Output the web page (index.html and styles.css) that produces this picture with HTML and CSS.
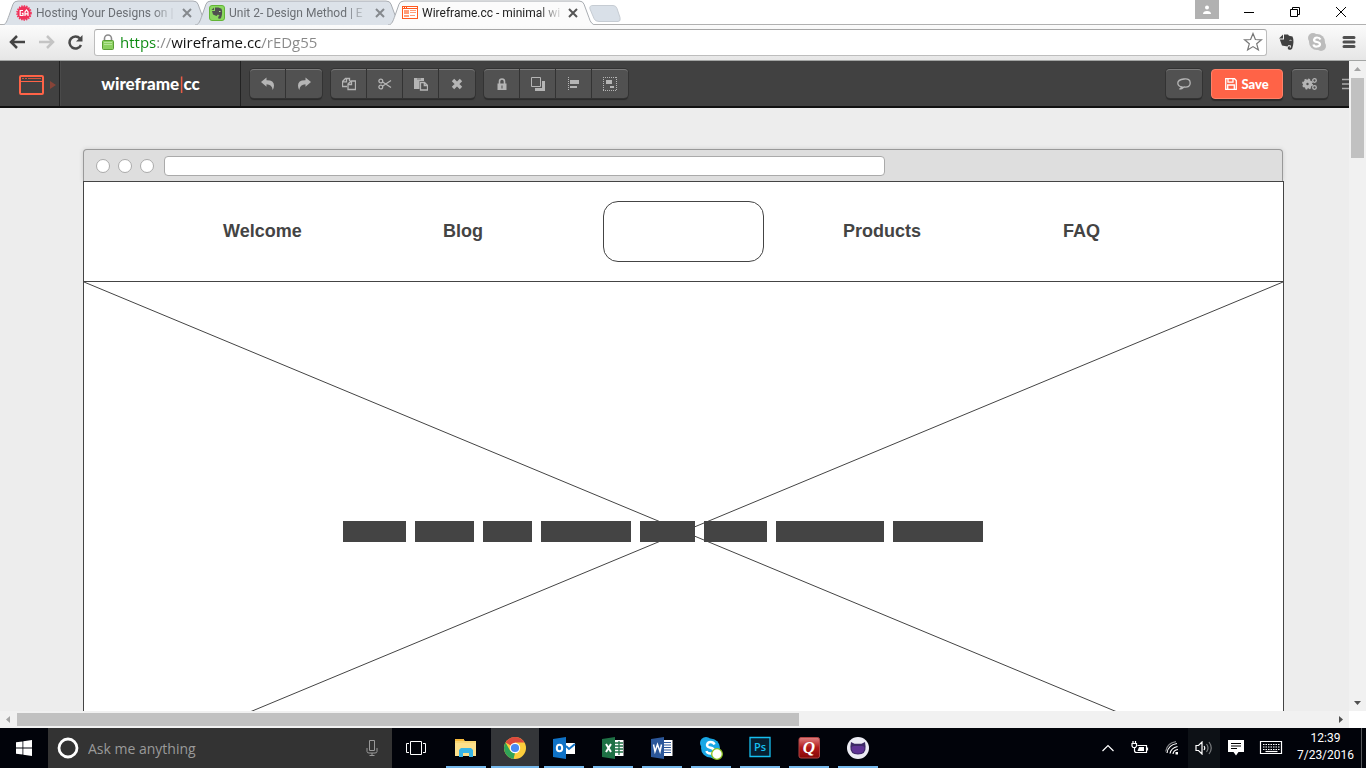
FILE: index.html
```html
<!DOCTYPE html>
<html lang="en">
<head>
<meta charset="utf-8">
<title>Wireframe.cc - minimal wireframing tool</title>
<link rel="stylesheet" href="styles.css">
</head>
<body>
<header class="tabstrip">
  <nav class="tabs" aria-label="Open tabs">
    <div class="tab">
      <svg class="tab-shape" viewBox="0 0 208 24" preserveAspectRatio="none"><path d="M0 24C4 24 5 20 7 15L11 4Q12 1 16 1H191Q195 1 196 4L201 17Q203 24 208 24" vector-effect="non-scaling-stroke"/></svg>
      <svg class="favicon" viewBox="0 0 16 16"><circle cx="8" cy="8" r="6.8" fill="#f0325a"/><circle cx="8" cy="8" r="7" fill="none" stroke="#f0325a" stroke-width="1.6" stroke-dasharray="1.4 1.1"/><path d="M7 5.500H4.200v5H7V8.300H5.800M9 11V7l1.500-2L12 7v4M9 8.800h3" fill="none" stroke="#fff" stroke-width="1.200"/></svg>
      <a class="tab-title" href="#">Hosting Your Designs on |</a>
      <button class="tab-close" aria-label="Close tab"><svg viewBox="0 0 10 10"><path d="M1 1l8 8M9 1L1 9"/></svg></button>
    </div>
    <div class="tab">
      <svg class="tab-shape" viewBox="0 0 208 24" preserveAspectRatio="none"><path d="M0 24C4 24 5 20 7 15L11 4Q12 1 16 1H191Q195 1 196 4L201 17Q203 24 208 24" vector-effect="non-scaling-stroke"/></svg>
      <svg class="favicon" viewBox="0 0 16 16"><rect x=".5" y=".5" width="15" height="15" rx="2.500" fill="#8bd860" stroke="#62b536"/><path d="M6 2.500h3.500l3 1.300c1 2.500.8 6-.3 8.700-.6 1.700-3 1.500-3 0 0-1.300 1-1.800 1.800-1.300L9 9.500 7.500 11 4 9.500 3 6h3z" fill="#505050"/><path d="M2.500 5L5 2.500V5z" fill="#505050"/><path d="M10 6.500h1.500" stroke="#b7e89c"/></svg>
      <a class="tab-title" href="#">Unit 2- Design Method | E</a>
      <button class="tab-close" aria-label="Close tab"><svg viewBox="0 0 10 10"><path d="M1 1l8 8M9 1L1 9"/></svg></button>
    </div>
    <div class="tab tab-active">
      <svg class="tab-shape" viewBox="0 0 208 24" preserveAspectRatio="none"><path d="M0 24C4 24 5 20 7 15L11 4Q12 1 16 1H191Q195 1 196 4L201 17Q203 24 208 24" vector-effect="non-scaling-stroke"/></svg>
      <svg class="favicon" viewBox="0 0 16 16"><path d="M0 1h16v13H0z" fill="#ff5a1f"/><path d="M1 4h14v9H1z" fill="#fff"/><path d="M1 2.500h1M3 2.500h1M5 2.500h10" stroke="#fff"/><path d="M2 5h5v4H2zM8 5h6v1H8zM8 7h6v1H8zM2 10h5v2H2zM8 10h5v1H8z" fill="#ff9c78"/></svg>
      <a class="tab-title" href="#">Wireframe.cc - minimal wi</a>
      <button class="tab-close" aria-label="Close tab"><svg viewBox="0 0 10 10"><path d="M1 1l8 8M9 1L1 9"/></svg></button>
    </div>
    <button class="new-tab" aria-label="New tab"><svg viewBox="0 0 32 17"><path d="M4 .5h20q3 0 4 3l3 9q1 4-2 4H10q-4 0-5-3L1 4Q0 .5 4 .5z" fill="#d9e0e8" stroke="#c6ccd3"/></svg></button>
  </nav>
  <div class="window-controls">
    <button class="profile" aria-label="Profile"><svg width="10" height="10" viewBox="0 0 10 10"><circle cx="5" cy="2.500" r="2" fill="#fff"/><path d="M1 9q0-3 4-3t4 3z" fill="#fff"/></svg></button>
    <button class="win" aria-label="Minimize"><svg width="12" height="12" viewBox="0 0 12 12"><path d="M1 6.500h10"/></svg></button>
    <button class="win" aria-label="Restore"><svg width="12" height="12" viewBox="0 0 12 12"><path d="M1.500 3.500h7v7h-7zM3.500 3.500v-2h7v7h-2"/></svg></button>
    <button class="win" aria-label="Close"><svg width="12" height="12" viewBox="0 0 12 12"><path d="M1 1l10 10M11 1L1 11"/></svg></button>
  </div>
</header>

<div class="addressbar">
  <button class="nav-btn" aria-label="Back"><svg width="17" height="16" viewBox="0 0 17 16"><path d="M8 2L2 8l6 6M2 8h14" stroke="#444"/></svg></button>
  <button class="nav-btn" aria-label="Forward"><svg width="17" height="16" viewBox="0 0 17 16"><path d="M9 2l6 6-6 6M15 8H1" stroke="#c4c4c4"/></svg></button>
  <button class="nav-btn" aria-label="Reload"><svg width="17" height="16" viewBox="0 0 17 16"><path d="M13 4.500A6 6 0 1 0 14 11" stroke="#4a4a4a"/><path d="M15.500 1v6.500H9z" fill="#4a4a4a" stroke="none"/></svg></button>
  <div class="omnibox">
    <svg width="12" height="16" viewBox="0 0 12 16"><path d="M2.500 7V4.500a3.500 3.500 0 0 1 7 0V7" fill="none" stroke="#8b8b8b" stroke-width="1.600"/><rect x=".5" y="6.500" width="11" height="9" rx="1" fill="#8bd05f" stroke="#5a9e35"/><path d="M2 8.500h8M2 10.500h8" stroke="#b5e598"/></svg>
    <input class="url" type="text" aria-label="Address" value="https://wireframe.cc/rEDg55">
    <button class="icon-btn" aria-label="Bookmark"><svg width="20" height="20" viewBox="0 0 20 20"><path d="M10 1.500l2.400 6 6.100.3-4.800 4 1.700 6.200-5.400-3.400L4.600 18l1.700-6.200-4.800-4 6.100-.3z" fill="#fff" stroke="#777" stroke-width="1.200"/></svg></button>
  </div>
  <button class="icon-btn" aria-label="Evernote"><svg width="16" height="18" viewBox="0 0 16 18"><path d="M5 1.500h4l1 1.200 3.500.8c1.500 3 1.200 8-.3 12-1 1.800-4 1.800-4.400 0-.2-2 1.200-2.700 2.200-2l-.3 1.200h1l.3-2.200-2.500-.5-1 1.500L3 12.500.8 6.500H5z" fill="#414141"/><path d="M0 5.500L4 1.500v4z" fill="#414141"/><path d="M10.500 7.500q1.500-1 2 .5" stroke="#ccc" fill="none"/></svg></button>
  <button class="icon-btn" aria-label="Skype"><svg width="20" height="20" viewBox="0 0 20 20"><circle cx="6" cy="6" r="5" fill="#bcbcbc"/><circle cx="14" cy="14" r="5" fill="#bcbcbc"/><circle cx="10" cy="10" r="8" fill="#bcbcbc"/><path d="M13.500 7.500Q12.500 5.500 10 5.500T7 8q0 1.500 3 2t3 2.300-3 2.200-3.600-2" fill="none" stroke="#fff" stroke-width="2.200"/></svg></button>
  <button class="icon-btn menu" aria-label="Menu"><svg width="14" height="14" viewBox="0 0 14 14"><path d="M2 2.500h10M2 7h10M2 11.500h10" stroke="#505050" stroke-width="3" stroke-linecap="round"/></svg></button>
</div>

<main class="view">
  <div class="view-row">
    <section class="page">
      <div class="toolbar">
        <button class="device" aria-label="Device">
          <svg width="26" height="20" viewBox="0 0 26 20"><rect x="2" y="1" width="23" height="18" rx="1" fill="none" stroke="#ff6347" stroke-width="2"/><path d="M3 6.500h21" stroke="#ff6347"/><path d="M4 3.500h2M7 3.500h2M10 3.500h13" stroke="#d4573f"/></svg>
          <svg width="6" height="8" viewBox="0 0 6 8"><path d="M0 0l6 4-6 4z" fill="#874438"/></svg>
        </button>
        <a class="logo" href="#">wireframe<span class="logo-bar">|</span>cc</a>
        <div class="groups">
          <div class="group">
            <button aria-label="Undo"><svg width="16" height="14" viewBox="0 0 16 14"><path d="M1 5l5.500-4.500V3.200Q14 3 14 8.500q0 2-1.300 4.500Q12 7.500 6.500 7.300v2.400z"/></svg></button>
            <button aria-label="Redo"><svg width="16" height="14" viewBox="0 0 16 14"><path d="M15 5L9.500.5v2.700Q2 3 2 8.500q0 2 1.300 4.500Q4 7.500 9.500 7.300v2.400z"/></svg></button>
          </div>
          <div class="group">
            <button aria-label="Copy"><svg width="14" height="14" viewBox="0 0 14 14"><path class="line" d="M5 9.500H.5V4.500l3-3h4V4M4.500 1.500v3.300H1M6 12.500V7l3-3h4.500v8.500zM9.500 4v3.500H6"/></svg></button>
            <button aria-label="Cut"><svg width="14" height="14" viewBox="0 0 14 14"><path class="line" d="M4.300 4.800L13 10.500M4.300 9.200L13 3.500"/><circle class="line" cx="2.800" cy="4" r="1.900"/><circle class="line" cx="2.800" cy="10" r="1.900"/></svg></button>
            <button aria-label="Paste"><svg width="14" height="14" viewBox="0 0 14 14"><path d="M0 1h10v3H5.500v8H0z"/><path d="M3 1.500h4v1H3z" fill="#777"/><path class="line" d="M6.500 5.500h4l3 3v4.500h-7zM10.300 5.500v3h3"/></svg></button>
            <button aria-label="Delete"><svg width="12" height="12" viewBox="0 0 12 12"><path class="line thick" d="M2 2l8 8M10 2l-8 8"/></svg></button>
          </div>
          <div class="group">
            <button aria-label="Lock"><svg width="10" height="12" viewBox="0 0 10 12"><path d="M.5 5.500h9V12h-9z"/><path class="line thin" d="M2.500 6V3.500a2.500 2.500 0 0 1 5 0V6"/><path d="M4.500 7.500h1v3h-1z" fill="#505050"/></svg></button>
            <button aria-label="Arrange"><svg width="14" height="14" viewBox="0 0 14 14"><path d="M11 4h3v10H4v-3h7z"/><path class="line one" d="M.5.500h9v9h-9z"/></svg></button>
            <button aria-label="Align"><svg width="12" height="14" viewBox="0 0 12 14"><path class="line dots" d="M.5 0v14"/><path d="M2 3h9v4H2zM2 9h7v2H2z"/></svg></button>
            <button aria-label="Group"><svg width="14" height="14" viewBox="0 0 14 14"><path class="line dots" d="M0 .5h14M0 13.500h14M.5 0v14M13.500 0v14"/><path d="M3 3h6v4H3zM7 9h4v2H7z"/></svg></button>
          </div>
        </div>
        <div class="actions">
          <div class="group"><button aria-label="Comments"><svg width="14" height="12" viewBox="0 0 14 12"><path class="line" d="M5 9Q.8 8.200.8 5T7 1t6.200 4T7 9Q5 11 2.500 11 4.500 10 5 9z"/></svg></button></div>
          <button class="save"><svg width="12" height="12" viewBox="0 0 12 12"><path d="M.7.700h8.800l1.800 1.800v8.800H.7zM3 .7v3.500h5V.7M2.700 11V7h6.600v4" fill="none" stroke="#fff" stroke-width="1.300"/></svg>Save</button>
          <div class="group"><button aria-label="Settings"><svg width="16" height="14" viewBox="0 0 16 14"><circle class="line thick" cx="5.500" cy="7" r="2.900"/><circle class="line notch" cx="5.500" cy="7" r="4.700"/><circle class="line" cx="12.500" cy="3.500" r="1.800"/><circle class="line" cx="12.500" cy="10.500" r="1.800"/></svg></button></div>
          <button class="more" aria-label="More"><svg width="7" height="12" viewBox="0 0 7 12"><path d="M0 1.500h7M0 6h7M0 10.500h7" stroke="#aaa" stroke-width="1.500"/></svg></button>
        </div>
      </div>
      <div class="canvas">
        <article class="wire">
          <div class="wire-chrome"><i class="dot"></i><i class="dot"></i><i class="dot"></i><input class="wire-url" type="text" aria-label="Mock address"></div>
          <nav class="wire-nav">
            <a href="#" class="w1">Welcome</a><a href="#">Blog</a><div class="wire-logo"></div><a href="#">Products</a><a href="#">FAQ</a>
          </nav>
          <div class="hero">
            <svg class="cross" viewBox="0 0 1200 500" preserveAspectRatio="none"><path d="M0 0L1200 500M1200 0L0 500" vector-effect="non-scaling-stroke"/></svg>
            <div class="bars"><i class="b63"></i><i class="b59"></i><i class="b49"></i><i class="b90"></i><i class="b55"></i><i class="b63"></i><i class="b108"></i><i class="b90"></i></div>
          </div>
        </article>
      </div>
    </section>
    <div class="vscroll"><svg viewBox="0 0 17 17"><path d="M5 10l3.500-4 3.500 4z" fill="#a3a3a3"/></svg><i class="vthumb"></i><svg class="end" viewBox="0 0 17 17"><path d="M5 7l3.500 4L12 7z" fill="#505050"/></svg></div>
  </div>
  <div class="hscroll"><svg viewBox="0 0 17 17"><path d="M10 5L6 8.500l4 3.500z" fill="#a3a3a3"/></svg><i class="hthumb"></i><svg class="end" viewBox="0 0 17 17"><path d="M7 5l4 3.500L7 12z" fill="#505050"/></svg></div>
</main>

<footer class="taskbar">
  <button class="slot" aria-label="Start"><svg width="16" height="16" viewBox="0 0 16 16"><path d="M0 2.300L6.500 1.400V7.600H0zM7.300 1.300L16 0V7.600H7.300zM0 8.400h6.500v6.200L0 13.700zM7.300 8.400H16V16L7.300 14.700z" fill="#fff"/></svg></button>
  <div class="search">
    <svg width="22" height="22" viewBox="0 0 22 22"><circle cx="11" cy="11" r="9" fill="none" stroke="#fff" stroke-width="2.800"/></svg>
    <input type="text" aria-label="Search" placeholder="Ask me anything">
    <svg width="12" height="16" viewBox="0 0 12 16"><path d="M3.500.500h5v10h-5zM1 8v3.500q0 1.500 2 1.500h6q2 0 2-1.500V8M6 13v2.500M3.500 15.500h5" fill="none" stroke="#999"/></svg>
  </div>
  <button class="slot" aria-label="Task view"><svg width="20" height="14" viewBox="0 0 20 14"><path d="M4.500.500h11v13h-11zM3 2.500H.5v9H3M17 2.500h2.500v9H17" fill="none" stroke="#fff"/></svg></button>
  <div class="apps">
    <button class="app" aria-label="File Explorer"><svg viewBox="0 0 24 24"><path d="M1 3h8l2 2h11v15H1z" fill="#f9d774"/><path d="M1 3h9v2H1z" fill="#f5b93b"/><path d="M1 7h21v13H1z" fill="#fce08b"/><path d="M5 21v-7l2-2h10l2 2v7h-4v-4H9v4z" fill="#37b5e6"/></svg></button>
    <button class="app current" aria-label="Chrome"><svg viewBox="0 0 24 24"><circle cx="12" cy="12" r="11" fill="#fccd3c"/><path d="M12 12L2.500 6.500A11 11 0 0 1 21.500 6.500H12z" fill="#dc4a3e"/><path d="M2.500 6.500L7.300 15 12 17l-1.500 5.900A11 11 0 0 1 2.500 6.500z" fill="#30a357"/><circle cx="12" cy="12" r="5.200" fill="#fff"/><circle cx="12" cy="12" r="4.100" fill="#4a8af4"/></svg></button>
    <button class="app" aria-label="Outlook"><svg viewBox="0 0 24 24"><path d="M13 7h10v11H13z" fill="#fff"/><path d="M14 10l3 3 6-5" fill="none" stroke="#0f72c6" stroke-width="2"/><path d="M1 3l13-2v22L1 21z" fill="#0f72c6"/><ellipse cx="7.500" cy="12" rx="2.700" ry="3.300" fill="none" stroke="#fff" stroke-width="2"/></svg></button>
    <button class="app" aria-label="Excel"><svg viewBox="0 0 24 24"><path d="M13 4h9.500v16H13z" fill="#fff"/><path d="M14 7h8M14 10h8M14 13h8M14 16h8M18 5v14" stroke="#1e7145" stroke-width="1.300"/><path d="M1 3l13-2v22L1 21z" fill="#1e7145"/><path d="M5 8l5 8M10 8l-5 8" stroke="#fff" stroke-width="2"/></svg></button>
    <button class="app" aria-label="Word"><svg viewBox="0 0 24 24"><path d="M13 4h9.500v16H13z" fill="#fff"/><path d="M14 6.500h7M14 9h7M14 11.500h7M14 14h7M14 16.500h7" stroke="#2b579a" stroke-width="1.200"/><path d="M1 3l13-2v22L1 21z" fill="#2b579a"/><path d="M3.500 8.500l1.500 7 2.500-7 2.500 7 1.500-7" fill="none" stroke="#fff" stroke-width="1.500"/></svg></button>
    <button class="app" aria-label="Skype"><svg viewBox="0 0 24 24"><circle cx="7" cy="7" r="6" fill="#18a7e5"/><circle cx="11.500" cy="12" r="9.500" fill="#18a7e5"/><circle cx="16" cy="17" r="6" fill="#18a7e5"/><path d="M15.500 8.500Q14.500 6 11.500 6T8 9q0 2 3.500 2.700T15 15q0 2.500-3.500 2.500T7.500 15" fill="none" stroke="#fff" stroke-width="2.400"/><circle cx="18" cy="18" r="5.300" fill="#fff" stroke="#8bc220" stroke-width="1.300"/></svg></button>
    <button class="app" aria-label="Photoshop"><svg viewBox="0 0 24 24"><path d="M2 1.500h20v19H2z" fill="#071f30" stroke="#16bff0" stroke-width="1.300"/><text class="ps" x="12" y="15" text-anchor="middle">Ps</text></svg></button>
    <button class="app" aria-label="Quicken"><svg viewBox="0 0 24 24"><defs><linearGradient id="q" x2="0" y2="1"><stop stop-color="#e08080"/><stop offset=".5" stop-color="#b01818"/><stop offset="1" stop-color="#850808"/></linearGradient></defs><rect x="2" y="1.500" width="20.500" height="20.500" rx="2" fill="url(#q)" stroke="#b04444"/><text class="qk" x="12" y="17" text-anchor="middle">Q</text></svg></button>
    <button class="app" aria-label="GitHub"><svg viewBox="0 0 24 24"><circle cx="12" cy="12" r="11" fill="#ececf4"/><path d="M5 6l3.500 1.700h7L19 6l.6 4.500q.6 8-7.600 8t-7.600-8z" fill="#3d2a66"/><path d="M5.500 12q0-2 2.500-2h8q2.500 0 2.500 2 0 5.500-6.500 5.500T5.500 12z" fill="#5f3394"/></svg></button>
  </div>
  <div class="tray">
    <button aria-label="Show hidden icons"><svg width="14" height="8" viewBox="0 0 14 8"><path d="M1.500 7L7 1.500 12.500 7"/></svg></button>
    <button aria-label="Battery"><svg width="18" height="14" viewBox="0 0 18 14"><path d="M6.500 4.500h9v7H5M16.500 6.500v3M1 2.500h4.500v2.500L4.500 6.500H2L1 5zM2 2.500V0M4.500 2.500V0M3.500 6.500v3q0 2 2 2"/><path d="M8 6h5v4H6.500z" class="solid"/></svg></button>
    <button aria-label="Network"><svg width="15" height="14" viewBox="0 0 15 14"><path d="M2 12Q3 4 12 2.500M5 12.500q1-5.500 7.500-7M8 13q.5-4 5-4.500"/><path d="M.7 10.500Q2 2 11 .7" opacity=".5"/><path d="M10.500 11h2.500v2.500h-2.500z" class="solid"/></svg></button>
    <button class="lit" aria-label="Volume"><svg width="18" height="14" viewBox="0 0 18 14"><path d="M1 4.500h2.500L7 1v12L3.500 9.500H1zM9 5q1.500 2 0 4"/><path d="M11.500 3q3 4 0 8M14 1q4.500 6 0 12" opacity=".45"/></svg></button>
    <button aria-label="Notifications"><svg width="16" height="16" viewBox="0 0 16 16"><path class="solid" d="M0 0h16v12h-5.500L8 15.500 5.500 12H0z"/><path d="M3 3.500h10M3 6h10M3 8.500h6" stroke="#000"/></svg></button>
    <button class="wide" aria-label="Keyboard"><svg width="24" height="14" viewBox="0 0 24 14"><path d="M1.500.500h21v12h-21z"/><path d="M4 3.500h17M4 6h17M4 8.500h17" stroke-dasharray="1.500 1"/><path d="M6.500 10.500h12"/></svg></button>
    <div class="clock"><time>12:39</time><time>7/23/2016</time></div>
    <i class="desktop"></i>
  </div>
</footer>
</body>
</html>
```

FILE: styles.css
```css
* { box-sizing: border-box; }
body {
  margin: 0;
  height: 100vh;
  display: flex;
  flex-direction: column;
  overflow: hidden;
  font-family: "Open Sans", "Noto Sans", sans-serif;
  background: #fff;
}
button { border: 0; padding: 0; margin: 0; background: none; display: flex; align-items: center; justify-content: center; font: inherit; }
input { border: 0; padding: 0; margin: 0; min-width: 0; font: inherit; outline: 0; background: none; }
a { color: inherit; text-decoration: none; }
svg { display: block; flex: none; }

/* Tab strip */
.tabstrip { display: flex; justify-content: space-between; height: 25px; flex: none; border-bottom: 1px solid #b1b1b1; }
.tabs { display: flex; padding-left: 2px; }
.tab { position: relative; isolation: isolate; width: 208px; height: 25px; margin-right: -15px; padding: 1px 15px 0 14px; display: flex; align-items: center; gap: 4px; font-family: Roboto, sans-serif; font-size: 12px; color: #6b6f74; }
.tab-active { color: #222; z-index: 1; }
.tab-shape { position: absolute; left: 0; top: 0; width: 100%; height: 25px; z-index: -1; fill: #dce2e9; stroke: #a9adb2; }
.tab-active .tab-shape { fill: #fbfbfb; }
.favicon { width: 16px; height: 16px; }
.tab-title { flex: 1; white-space: nowrap; line-height: 20px; -webkit-mask-image: linear-gradient(90deg, #000 84%, rgba(0, 0, 0, .2) 97%); mask-image: linear-gradient(90deg, #000 84%, rgba(0, 0, 0, .2) 97%); }
.tab-close { width: 16px; height: 16px; }
.tab-close svg { width: 10px; height: 10px; fill: none; stroke: #85898d; stroke-width: 2; }
.tab-active .tab-close svg { stroke: #555; }
.new-tab { margin-left: 8px; padding-top: 2px; }
.new-tab svg { width: 32px; height: 17px; }
.window-controls { display: flex; padding-right: 2px; }
.profile { width: 24px; height: 19px; background: #b1b1b1; margin-right: 7px; }
.win { width: 46px; height: 24px; }
.win svg { fill: none; stroke: #000; }

/* Address bar */
.addressbar { display: flex; align-items: center; flex: none; height: 36px; padding: 0 10px 1px 9px; gap: 12px; background: linear-gradient(#fbfbfb, #e6e6e6); border-bottom: 1px solid #a3a5a4; }
.nav-btn svg { fill: none; stroke-width: 2.500; }
.omnibox { flex: 1; height: 27px; display: flex; align-items: center; gap: 6px; padding: 0 3px 0 7px; border: 1px solid #bdbdbd; border-top-color: #a6a6a6; border-radius: 3px; background: #fff; margin-left: -2px; }
.url {
  flex: 1;
  height: 24px;
  font-size: 15px;
  color: transparent;
  background: linear-gradient(90deg, #0b8a10 0 37px, #888 37px 52px, #111 52px 142px, #888 142px);
  -webkit-background-clip: text;
  background-clip: text;
}
.menu { margin-left: 3px; }

/* Viewport */
.view { flex: 1; min-height: 0; display: flex; flex-direction: column; }
.view-row { flex: 1; min-height: 0; display: flex; }
.page { flex: 1; min-width: 0; display: flex; flex-direction: column; overflow: hidden; background: #ededed; }
.toolbar { flex: none; height: 47px; display: flex; background: #414141; border-bottom: 2px solid #111; }
.device { width: 60px; gap: 6px; padding: 2px 0 0 14px; border-right: 1px solid #222; }
.logo { width: 181px; display: flex; align-items: center; justify-content: center; border-right: 1px solid #222; border-left: 1px solid #4a4a4a; font: 900 17px Lato, sans-serif; color: #fff; }
.logo-bar { color: #ff6347; font-weight: 400; }
.groups, .actions { display: flex; align-items: center; gap: 9px; padding-left: 9px; }
.actions { margin-left: auto; }
.group { display: flex; border-radius: 4px; background: #515151; box-shadow: 0 0 0 1px #333, 0 2px 1px #2b2b2b; }
.group button { width: 36px; height: 29px; border-top: 1px solid #7b7b7b; }
.group button + button { box-shadow: -1px 0 #333; }
.group button:first-child { border-top-left-radius: 4px; border-bottom-left-radius: 4px; }
.group button:last-child { border-top-right-radius: 4px; border-bottom-right-radius: 4px; }
.group svg { fill: #b5b5b5; }
.group .line { fill: none; stroke: #b5b5b5; stroke-width: 1.300; }
.group .thick { stroke-width: 3.400; }
.group .thin { stroke-width: 1.600; }
.group .one { stroke-width: 1; }
.group .dots { stroke-width: 1; stroke-dasharray: 1 1; shape-rendering: crispEdges; }
.group .notch { stroke-width: 1.600; stroke-dasharray: 1.900 1.800; }
.save { width: 72px; height: 30px; gap: 4px; border-radius: 4px; background: #ff6347; border: 1px solid #ff8168; box-shadow: 0 2px 1px #2b2b2b; font: 900 13px Lato, sans-serif; color: #fff; }
.more { width: 7px; margin-left: 5px; }

/* Wireframe document */
.canvas { flex: 1; min-height: 0; overflow: hidden; padding: 41px 65px 0 83px; }
.wire-chrome { height: 32px; display: flex; align-items: center; gap: 8px; padding: 0 397px 0 12px; margin-right: 1px; background: #dedede; border: 1px solid #999; border-bottom: 0; border-radius: 4px 4px 0 0; box-shadow: 0 0 4px #ccc; }
.dot { width: 14px; height: 14px; flex: none; border-radius: 50%; background: #fff; border: 1px solid #aaa; }
.wire-url { flex: 1; height: 20px; margin-left: 2px; background: #fff; border: 1px solid #aaa; border-radius: 4px; }
.wire-nav { height: 101px; display: grid; grid-template-columns: 139fr 220fr 160fr 240fr 220fr 220fr; align-items: center; background: #fff; border: 1px solid #444; font: 700 18px "Liberation Sans", sans-serif; color: #444; }
.w1 { grid-column: 2; }
.wire-logo { width: 161px; height: 61px; border: 1px solid #444; border-radius: 15px; }
.hero { display: grid; background: #fff; border: solid #444; border-width: 0 1px; }
.cross, .bars { grid-area: 1 / 1; }
.cross { width: 100%; height: 499px; fill: none; stroke: #444; }
.bars { display: flex; gap: 9px; height: 21px; align-self: center; justify-self: center; margin-right: 41px; }
.bars i { background: #444; }
.b49 { width: 49px; }
.b55 { width: 55px; }
.b59 { width: 59px; }
.b63 { width: 63px; }
.b90 { width: 90px; }
.b108 { width: 108px; }

/* Scrollbars */
.vscroll { width: 17px; flex: none; display: flex; flex-direction: column; align-items: center; background: #f1f1f1; }
.hscroll { height: 17px; flex: none; display: flex; align-items: center; background: #f1f1f1; border-right: 17px solid #fff; }
.vscroll svg, .hscroll svg { width: 17px; height: 17px; }
.vscroll .end { margin-top: auto; }
.hscroll .end { margin-left: auto; }
.vthumb { width: 13px; height: 80px; background: #c1c1c1; }
.hthumb { width: 58%; height: 13px; background: #c1c1c1; }

/* Taskbar */
.taskbar { height: 40px; flex: none; display: flex; background: #01030a; color: #fff; }
.slot { width: 48px; }
.search { width: 344px; display: flex; align-items: center; gap: 9px; padding: 0 14px 0 9px; background: #333; }
.search input { flex: 1; font-size: 14px; color: #fff; }
.search input::placeholder { color: #9a9a9a; opacity: 1; }
.apps { display: flex; gap: 1px; padding-left: 2px; }
.app { width: 48px; height: 40px; background: linear-gradient(#76b9ed, #76b9ed) center bottom / 40px 2px no-repeat; }
.app svg { width: 24px; height: 24px; }
.current { background-color: #343639; background-size: 48px 2px; }
.ps { font: 600 11px "Open Sans", sans-serif; fill: #16bff0; }
.qk { font: italic 700 17px "Liberation Serif", serif; fill: #fff; }
.tray { margin-left: auto; display: flex; }
.tray button { width: 32px; }
.tray .lit { background: #0d1116; }
.tray .wide { width: 38px; }
.tray svg { fill: none; stroke: #fff; stroke-width: 1.200; }
.tray .solid { fill: #fff; stroke: none; }
.clock { width: 71px; display: flex; flex-direction: column; align-items: center; justify-content: center; font-family: Roboto, sans-serif; font-size: 12px; line-height: 17px; padding-bottom: 2px; }
.desktop { width: 5px; border-left: 1px solid #55575b; }
```
